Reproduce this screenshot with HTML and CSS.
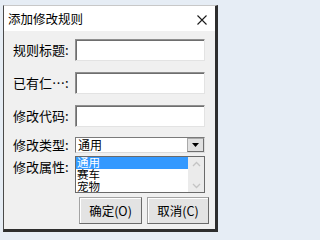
FILE: index.html
```html
<!DOCTYPE html>
<html lang="zh-CN">
<head>
<meta charset="utf-8">
<link rel="stylesheet" href="styles.css">
</head>
<body>
<div class="screen">
  <div class="window">
    <div class="titlebar">
      <span class="title">添加修改规则</span>
      <svg class="close" width="10" height="10" viewBox="0 0 10 10"><path d="M0.5 0.5 L9.5 9.5 M9.5 0.5 L0.5 9.5" stroke="#1a1a1a" stroke-width="1.1" fill="none"/></svg>
    </div>
    <div class="body">
      <div class="form">
        <div class="row r1"><span class="label">规则标题:</span><div class="input"></div></div>
        <div class="row r2"><span class="label">已有仁…:</span><div class="input"></div></div>
        <div class="row r3"><span class="label">修改代码:</span><div class="input"></div></div>
        <div class="row r4"><span class="label">修改类型:</span>
          <div class="combo">
            <span class="combo-text">通用</span>
            <span class="combo-btn"><svg width="7" height="4" viewBox="0 0 7 4"><path d="M0 0 H7 L3.5 4 Z" fill="#000"/></svg></span>
            <div class="listbox">
              <div class="items">
                <div class="item sel">通用</div>
                <div class="item">赛车</div>
                <div class="item">宠物</div>
              </div>
              <div class="scroll">
                <svg width="9" height="6" viewBox="0 0 9 6"><path d="M1 5 L4.5 1.5 L8 5" stroke="#c4c4c4" stroke-width="1.3" fill="none"/></svg>
                <svg width="9" height="6" viewBox="0 0 9 6"><path d="M1 1 L4.5 4.5 L8 1" stroke="#c4c4c4" stroke-width="1.3" fill="none"/></svg>
              </div>
            </div>
          </div>
        </div>
        <div class="row r5"><span class="label">修改属性:</span><div class="input"></div></div>
      </div>
      <div class="buttons">
        <div class="btn ok">确定(O)</div>
        <div class="btn cancel">取消(C)</div>
      </div>
    </div>
  </div>
</div>
</body>
</html>
```
FILE: styles.css
```css
html, body {
  margin: 0;
  padding: 0;
  background: #e6edf5;
}
body {
  font-family: "Noto Sans CJK SC", "Noto Sans", sans-serif;
  font-size: 13px;
  color: #000;
}
.screen {
  width: 224px;
  height: 239px;
  background: #e6edf5;
  padding: 5px 0 0 3px;
  box-sizing: border-box;
}
.window {
  width: 215px;
  height: 227px;
  box-sizing: border-box;
  border-left: 1px solid #4a4a4a;
  border-top: 1px solid #c8c8c8;
  border-right: 3px solid #2e2e2e;
  border-bottom: 3px solid #2e2e2e;
  display: flex;
  flex-direction: column;
}
.titlebar {
  height: 25px;
  background: #fff;
  display: flex;
  align-items: center;
  justify-content: space-between;
  padding: 0 8px 0 4px;
}
.title {
  font-size: 12.5px;
  line-height: 14px;
  margin-top: 1px;
}
.close {
  display: block;
  margin-top: 2px;
}
.body {
  flex: 1;
  background: #f0f0f0;
  padding: 8px 0 0 9px;
}
.form {
  display: flex;
  flex-direction: column;
}
.row {
  display: flex;
  align-items: center;
  height: 22px;
}
.r2, .r3 { margin-top: 11px; }
.r4 { margin-top: 10px; height: 16px; }
.r5 { margin-top: 3px; }
.label {
  width: 62px;
  flex: none;
  line-height: 16px;
  white-space: nowrap;
}
.input {
  width: 130px;
  height: 22px;
  box-sizing: border-box;
  background: #fff;
  border-top: 1px solid #8f8f8f;
  border-left: 1px solid #8f8f8f;
  border-right: 1px solid #e3e3e3;
  border-bottom: 1px solid #e3e3e3;
  box-shadow: inset 1px 1px 0 #6e6e6e;
}
.combo {
  position: relative;
  width: 130px;
  height: 16px;
  box-sizing: border-box;
  background: #fff;
  border-top: 1px solid #7a7a7a;
  border-left: 1px solid #7a7a7a;
  border-right: 1px solid #dcdcdc;
  border-bottom: 1px solid #dcdcdc;
  display: flex;
  align-items: center;
  justify-content: space-between;
}
.combo-text {
  font-size: 12px;
  line-height: 14px;
  padding-left: 2px;
}
.combo-btn {
  width: 17px;
  height: 14px;
  box-sizing: border-box;
  background: #e1e1e1;
  border: 1px solid #a9a9a9;
  border-right-color: #6f6f6f;
  border-bottom-color: #6f6f6f;
  display: flex;
  align-items: center;
  justify-content: center;
}
.combo-btn svg { display: block; }
.listbox {
  position: absolute;
  top: 18px;
  left: -1px;
  width: 130px;
  height: 37px;
  box-sizing: border-box;
  background: #fff;
  border: 1px solid #6a6a6a;
  display: flex;
  z-index: 2;
}
.items {
  flex: 1;
  display: flex;
  flex-direction: column;
}
.item {
  height: 12px;
  line-height: 12px;
  font-family: "Liberation Sans", "Noto Sans CJK SC", sans-serif;
  font-size: 11.5px;
  padding-left: 1px;
}
.item.sel {
  background: #3399ff;
  color: #fff;
}
.scroll {
  width: 16px;
  background: #ebebeb;
  display: flex;
  flex-direction: column;
  align-items: center;
  justify-content: space-between;
  padding: 4px 0 3px;
  box-sizing: border-box;
}
.scroll svg { display: block; }
.buttons {
  display: flex;
  gap: 5px;
  margin: 19px 0 0 66px;
}
.btn {
  height: 27px;
  box-sizing: border-box;
  background: #e3e3e3;
  border: 1px solid #a3a3a3;
  border-right-color: #6a6a6a;
  border-bottom-color: #6a6a6a;
  box-shadow: inset 1px 1px 0 #fff;
  display: flex;
  align-items: center;
  justify-content: center;
  font-size: 12.5px;
}
.ok { width: 63px; }
.cancel { width: 62px; }
```
